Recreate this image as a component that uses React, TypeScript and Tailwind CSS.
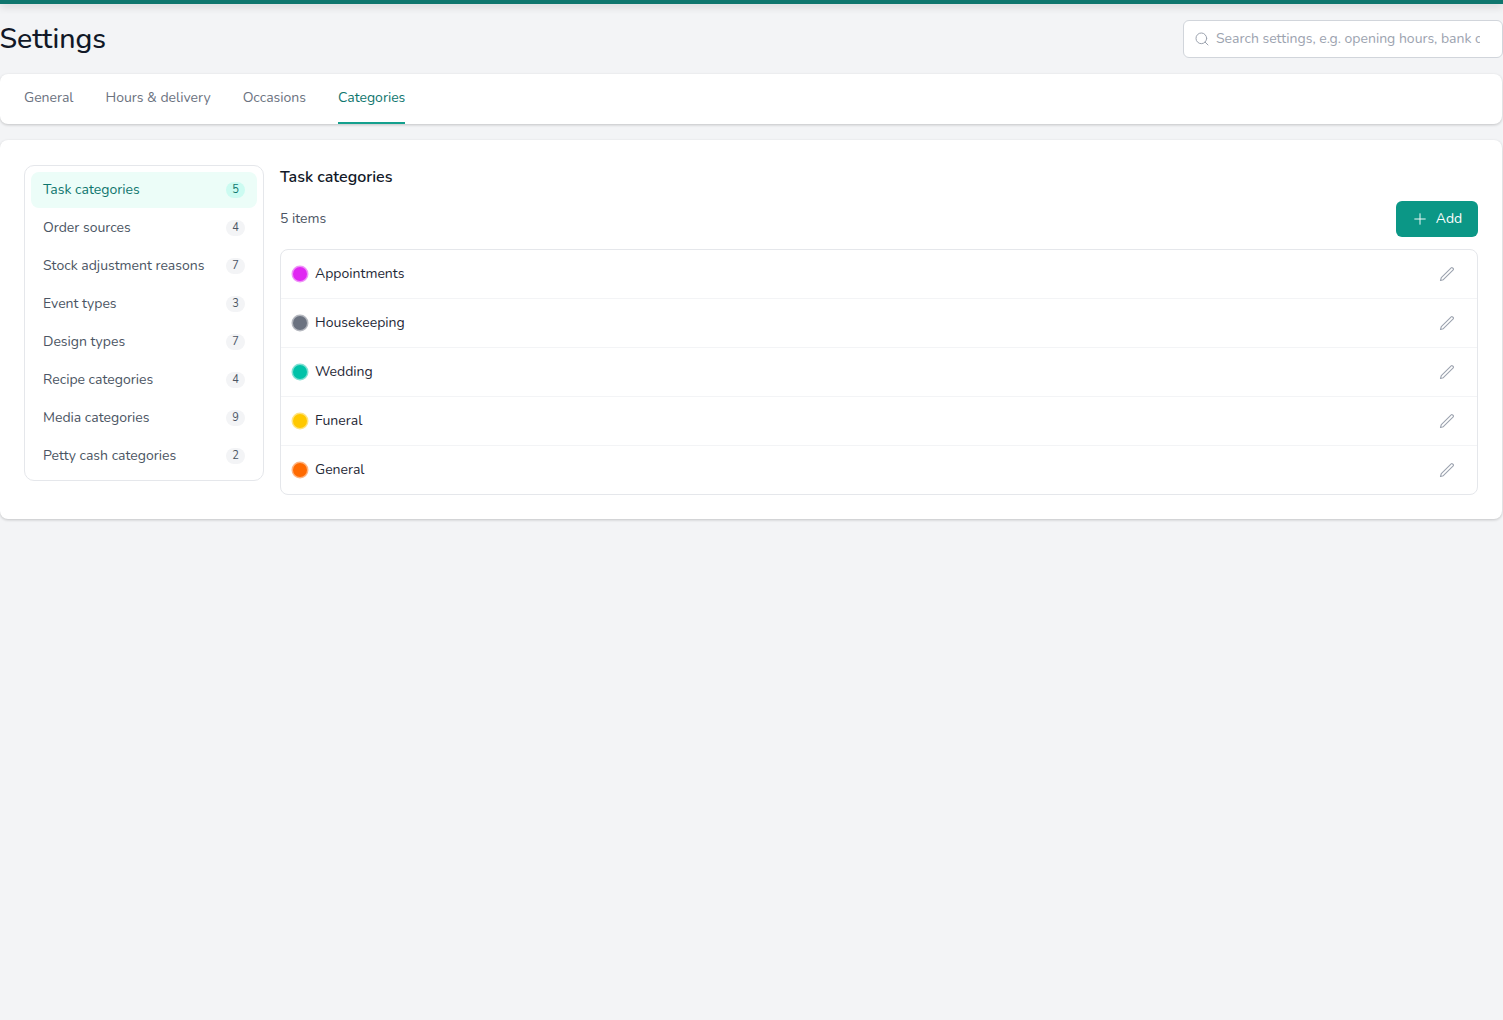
import { Search, Plus } from 'lucide-react';

const font = "font-['Nunito','Lato','Noto_Sans',sans-serif]";

const tabs = ['General', 'Hours & delivery', 'Occasions', 'Categories'];

const sidebarItems = [
  { label: 'Task categories', count: 5 },
  { label: 'Order sources', count: 4 },
  { label: 'Stock adjustment reasons', count: 7 },
  { label: 'Event types', count: 3 },
  { label: 'Design types', count: 7 },
  { label: 'Recipe categories', count: 4 },
  { label: 'Media categories', count: 9 },
  { label: 'Petty cash categories', count: 2 },
];

const categories = [
  { name: 'Appointments', dot: 'bg-[#e026f2]', ring: 'ring-[#e026f2]/50' },
  { name: 'Housekeeping', dot: 'bg-[#6b7280]', ring: 'ring-[#6b7280]/50' },
  { name: 'Wedding', dot: 'bg-[#00c2a8]', ring: 'ring-[#00c2a8]/50' },
  { name: 'Funeral', dot: 'bg-[#ffc800]', ring: 'ring-[#ffc800]/50' },
  { name: 'General', dot: 'bg-[#ff6a00]', ring: 'ring-[#ff6a00]/50' },
];

// slim pencil, lucide's one is too wide for this
function EditIcon() {
  return (
    <svg viewBox="0 0 16 16" fill="none" stroke="#9ca3af" strokeWidth="1.1" strokeLinejoin="round" className="h-4 w-4">
      <path d="M1.5 14.5l.8-2.8 9.9-9.9a.9.9 0 0 1 1.3 0l.7.7a.9.9 0 0 1 0 1.3L4.3 13.7z" />
    </svg>
  );
}

export default function App() {
  return (
    <div className={`${font} min-h-[1020px] bg-[#f3f4f6] text-[#111827]`}>
      <div className="h-1 bg-[#0f766e] shadow-[0_2px_8px_rgba(0,0,0,0.2)]" />

      <div className="w-[1502px]">
        <div className="flex h-[70.4px] items-center justify-between">
          <h1 className="-ml-[0.5px] text-[28.5px] font-medium leading-9">Settings</h1>
          <div className="-mr-[0.5px] flex h-[38px] w-[319.5px] items-center gap-[6px] overflow-hidden rounded-md border border-[#d1d5db] bg-white pl-[10px] pr-[22px]">
            <Search className="h-4 w-4 shrink-0 text-[#9ca3af]" strokeWidth={1.5} />
            <input
              readOnly
              placeholder="Search settings, e.g. opening hours, bank details"
              className="min-w-0 flex-1 bg-transparent text-sm outline-none placeholder:text-[#9ca3af]"
            />
          </div>
        </div>

        <div className="flex h-[49.6px] gap-8 rounded-lg bg-white px-6 shadow-[0_1px_3px_rgba(0,0,0,0.2)]">
          {tabs.map((tab) => (
            <div
              key={tab}
              className={
                tab === 'Categories'
                  ? 'flex items-center border-b-2 border-[#14a08e] text-sm text-[#0f766e]'
                  : 'flex items-center border-b-2 border-transparent text-sm text-[#6b7280]'
              }
            >
              {tab}
            </div>
          ))}
        </div>

        <div className="mt-[16.3px] flex h-[379px] gap-4 rounded-lg bg-white px-6 pb-6 pt-[24.9px] shadow-[0_1px_3px_rgba(0,0,0,0.2)]">
          <div className="h-[316px] w-[240px] shrink-0 rounded-[10px] border border-[#e5e7eb] p-1.5">
            <div className="flex flex-col gap-0.5">
              {sidebarItems.map((item, i) => (
                <div
                  key={item.label}
                  className={
                    i === 0
                      ? 'flex h-9 items-center justify-between rounded-lg bg-[#ecfdf8] px-3 text-sm text-[#0f766e]'
                      : 'flex h-9 items-center justify-between rounded-lg px-3 text-sm text-[#4b5563]'
                  }
                >
                  <span>{item.label}</span>
                  <span
                    className={
                      i === 0
                        ? 'flex h-4 w-[19px] items-center justify-center rounded-full bg-[#ccfbf1] text-[11px] text-[#0f766e]'
                        : 'flex h-4 w-[19px] items-center justify-center rounded-full bg-[#f3f4f6] text-[11px] text-[#4b5563]'
                    }
                  >
                    {item.count}
                  </span>
                </div>
              ))}
            </div>
          </div>

          <div className="min-w-0 flex-1">
            <h2 className="h-6 text-base font-semibold leading-6">Task categories</h2>
            <div className="mt-3 flex h-9 items-center justify-between">
              <span className="text-sm text-[#4b5563]">5 items</span>
              <button className="flex h-9 w-[82px] items-center justify-center gap-[7px] rounded-md bg-[#0b9786] pr-px text-sm text-white">
                <Plus className="h-[18px] w-[18px]" strokeWidth={1.25} />
                Add
              </button>
            </div>
            <div className="mt-3 rounded-lg border border-[#e5e7eb]">
              {categories.map((cat) => (
                <div
                  key={cat.name}
                  className="flex h-[49px] items-center justify-between border-b border-[#f3f4f6] pl-3 pr-[22px] last:h-12 last:border-b-0"
                >
                  <div className="flex items-center gap-2">
                    <span className={`h-[14px] w-[14px] rounded-full ring-[1.5px] ${cat.dot} ${cat.ring}`} />
                    <span className="text-sm text-[#1f2937]">{cat.name}</span>
                  </div>
                  <EditIcon />
                </div>
              ))}
            </div>
          </div>
        </div>
      </div>
    </div>
  );
}
